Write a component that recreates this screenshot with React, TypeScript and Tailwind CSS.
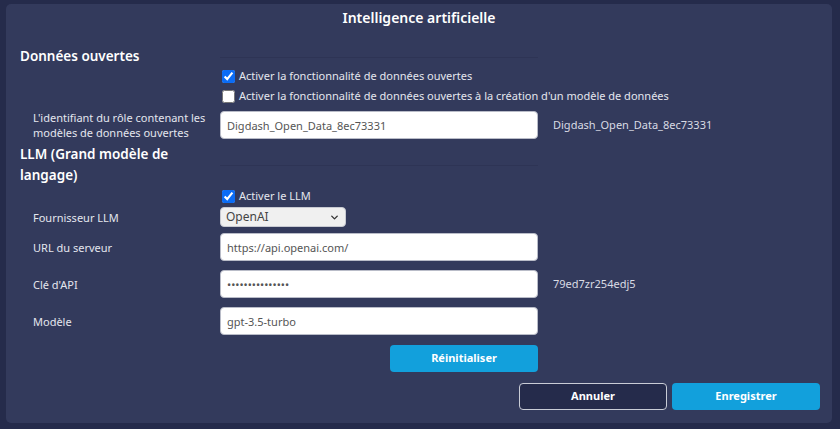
import { ChevronDown } from 'lucide-react'

function Row({ label, children, value }: { label?: React.ReactNode; children?: React.ReactNode; value?: string }) {
  return (
    <div className="grid grid-cols-[200px_318px_1fr] items-center">
      <div className="pl-[13px] text-[11px] leading-[15px] text-[#e4e6ee]">{label}</div>
      <div>{children}</div>
      <div className="pl-[15px] text-[11px] text-[#d9dbe4]">{value}</div>
    </div>
  )
}

function TextInput({ value, type = 'text' }: { value: string; type?: string }) {
  return (
    <input
      type={type}
      defaultValue={value}
      readOnly
      className="h-[28px] w-full rounded-[4px] border border-[#b9bcc8] bg-white px-[6px] text-[11px] text-[#555] outline-none"
    />
  )
}

function Check({ label, checked }: { label: string; checked?: boolean }) {
  return (
    <label className="flex h-[20px] items-center gap-[4px] pl-[2px] text-[11px] text-[#e4e6ee]">
      <input type="checkbox" defaultChecked={checked} className="m-0 h-[13px] w-[13px] accent-[#0b6cf5]" />
      {label}
    </label>
  )
}

export default function App() {
  return (
    <div
      className="h-[429px] w-[840px] bg-[#252b4b] pt-[4px] pl-[6px]"
      style={{ fontFamily: '"Noto Sans", "Open Sans", sans-serif' }}
    >
      <div className="flex h-[419px] w-[826px] flex-col rounded-[5px] bg-[#333a5c] px-[14px]">
        <h1 className="pt-[3px] text-center text-[14px] leading-[22px] font-semibold text-white">
          Intelligence artificielle
        </h1>

        {/* Données ouvertes */}
        <div className="mt-[17px] grid grid-cols-[200px_318px] items-center">
          <h2 className="text-[13.5px] leading-[20px] font-semibold text-white">Données ouvertes</h2>
          <div className="mt-[2px] border-b border-[#2e3455]" />
        </div>
        <div>
          <Row>
            <Check label="Activer la fonctionnalité de données ouvertes" checked />
          </Row>
          <Row>
            <div className="whitespace-nowrap">
              <Check label="Activer la fonctionnalité de données ouvertes à la création d'un modèle de données" />
            </div>
          </Row>
        </div>
        <div className="mt-[4px]">
          <Row
            label={<>L'identifiant du rôle contenant les modèles de données ouvertes</>}
            value="Digdash_Open_Data_8ec73331"
          >
            <TextInput value="Digdash_Open_Data_8ec73331" />
          </Row>
        </div>

        {/* LLM */}
        <div className="mt-[4px] grid grid-cols-[200px_318px] items-center">
          <h2 className="w-[180px] text-[13.5px] leading-[21px] font-semibold text-white">LLM (Grand modèle de langage)</h2>
          <div className="border-b border-[#2e3455]" />
        </div>
        <div>
          <Row>
            <Check label="Activer le LLM" checked />
          </Row>
        </div>
        <div className="mt-[1px]">
          <Row label="Fournisseur LLM">
            <div className="relative h-[20px] w-[126px] rounded-[4px] border border-[#c8cad2] bg-[#f0f0f0]">
              <span className="absolute left-[5px] top-[1px] text-[12px] leading-[16px] text-[#444]">OpenAI</span>
              <ChevronDown className="absolute right-[5px] top-[4px] h-[11px] w-[11px] text-[#333]" strokeWidth={3} />
            </div>
          </Row>
        </div>
        <div className="mt-[6px] flex flex-col gap-[9px]">
          <Row label="URL du serveur">
            <TextInput value="https://api.openai.com/" />
          </Row>
          <Row label="Clé d'API" value="79ed7zr254edj5">
            <TextInput value="•••••••••••••••" />
          </Row>
          <Row label="Modèle">
            <TextInput value="gpt-3.5-turbo" />
          </Row>
        </div>
        <div className="mt-[10px] grid grid-cols-[200px_318px]">
          <div />
          <div className="flex justify-end">
            <button className="h-[27px] w-[148px] rounded-[4px] bg-[#12a0dc] text-[11px] font-bold text-white">
              Réinitialiser
            </button>
          </div>
        </div>

        <div className="mt-[11px] flex justify-end gap-[5px]">
          <button className="h-[27px] w-[148px] rounded-[4px] border border-[#c9ccd6] bg-[#252b4b] text-[11px] font-bold text-white">
            Annuler
          </button>
          <button className="mr-[-2px] h-[27px] w-[148px] rounded-[4px] bg-[#12a0dc] text-[11px] font-bold text-white">
            Enregistrer
          </button>
        </div>
      </div>
    </div>
  )
}
